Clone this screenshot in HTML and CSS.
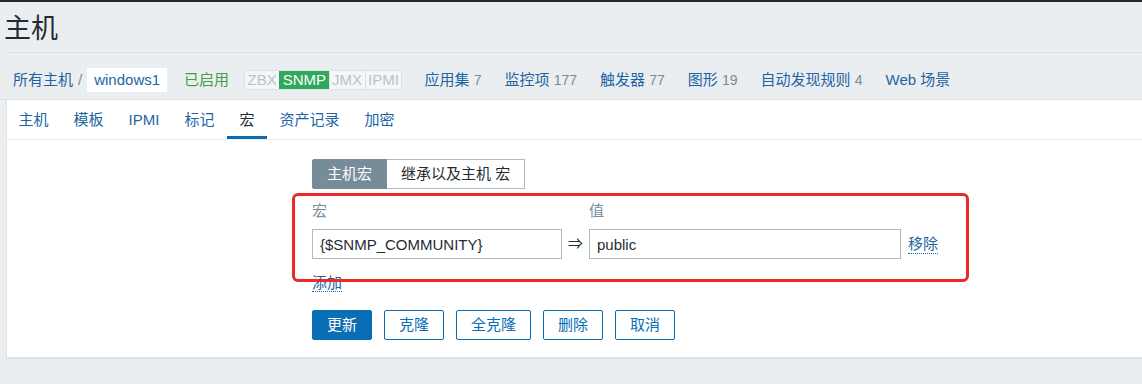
FILE: index.html
```html
<!DOCTYPE html>
<html lang="zh-CN">

<head>
  <meta charset="UTF-8" />
  <meta name="viewport" content="width=device-width, initial-scale=1.0" />
  <title>主机</title>
  <link rel="stylesheet" href="styles.css">
</head>

<body>
  <header class="page_header">
    <h1 class="page_title">主机</h1>
  </header>

  <nav class="host_nav">
    <div class="breadcrumbs">
      <a class="link" href="#">所有主机</a>
      <span class="breadcrumbs_sep">/</span>
      <span class="breadcrumbs_current"><a class="link" href="#">windows1</a></span>
    </div>
    <span class="status-enabled">已启用</span>
    <div class="status_container">
      <span class="status_item">ZBX</span>
      <span class="status_item status_item-green">SNMP</span>
      <span class="status_item">JMX</span>
      <span class="status_item">IPMI</span>
    </div>
    <ul class="host_nav-list">
      <li><a class="link" href="#">应用集</a> <sup class="count">7</sup></li>
      <li><a class="link" href="#">监控项</a> <sup class="count">177</sup></li>
      <li><a class="link" href="#">触发器</a> <sup class="count">77</sup></li>
      <li><a class="link" href="#">图形</a> <sup class="count">19</sup></li>
      <li><a class="link" href="#">自动发现规则</a> <sup class="count">4</sup></li>
      <li><a class="link" href="#">Web 场景</a></li>
    </ul>
  </nav>

  <main class="panel">
    <ul class="tabs">
      <li class="tab"><a href="#">主机</a></li>
      <li class="tab"><a href="#">模板</a></li>
      <li class="tab"><a href="#">IPMI</a></li>
      <li class="tab"><a href="#">标记</a></li>
      <li class="tab tab-active"><a href="#">宏</a></li>
      <li class="tab"><a href="#">资产记录</a></li>
      <li class="tab"><a href="#">加密</a></li>
    </ul>

    <form action="#" onsubmit="return false;" class="form">
      <div class="segment">
        <button type="button" class="segment_btn segment_btn-on">主机宏</button>
        <button type="button" class="segment_btn">继承以及主机 宏</button>
      </div>

      <div class="macros">
        <!-- red annotation frame from the screenshot, drawn over the table -->
        <div class="highlight"></div>
        <div class="macros_row macros_head">
          <span class="macros_col-name">宏</span>
          <span class="macros_arrow"></span>
          <span class="macros_col-value">值</span>
        </div>
        <div class="macros_row">
          <input class="textbox macros_col-name" type="text" value="{$SNMP_COMMUNITY}" />
          <span class="macros_arrow">&rArr;</span>
          <input class="textbox macros_col-value" type="text" value="public" />
          <a class="link link-action" href="#">移除</a>
        </div>
        <div class="macros_add">
          <a class="link link-action" href="#">添加</a>
        </div>
      </div>

      <div class="form_buttons">
        <button type="submit" class="btn btn-main">更新</button>
        <button type="button" class="btn">克隆</button>
        <button type="button" class="btn">全克隆</button>
        <button type="button" class="btn">删除</button>
        <button type="button" class="btn">取消</button>
      </div>
    </form>
  </main>
</body>

</html>
```

FILE: styles.css
```css
html {
  box-sizing: border-box;
}

*,
*::before,
*::after {
  box-sizing: inherit;
}

body {
  margin: 0;
  background: #ebeef0;
  color: #1f2c33;
  font-family: "Liberation Sans", "Noto Sans CJK SC", sans-serif;
  font-size: 15px;
  line-height: 20px;
}

ul {
  margin: 0;
  padding: 0;
  list-style: none;
}

a {
  text-decoration: none;
}

.link {
  color: #1c65a3;
}

.link-action {
  border-bottom: 1px dotted #1c65a3;
  line-height: 18px;
}

/* header */
.page_header {
  border-top: 2px solid #1f2c33;
}

.page_title {
  margin: 0 0 0 8px;
  padding: 3px 0 0 0;
  height: 51px;
  line-height: 48px;
  font-size: 27px;
  font-weight: normal;
  text-indent: -4px;
  border-bottom: 1px solid #dde2e5;
}

/* host navigation */
.host_nav {
  display: flex;
  align-items: center;
  height: 47px;
  padding: 8px 0 0 13px;
  border-bottom: 1px solid #dde2e5;
}

.breadcrumbs {
  display: flex;
  align-items: center;
}

.breadcrumbs_sep {
  margin: 0 5px 0 5px;
  color: #768d99;
}

.breadcrumbs_current {
  display: block;
  height: 24px;
  line-height: 24px;
  padding: 0 7px;
  background: #fff;
}

.status-enabled {
  margin-left: 17px;
  color: #429e47;
}

.status_container {
  display: flex;
  margin-left: 15px;
  height: 20px;
  border: 1px solid #dbe1e4;
  background: #f4f6f7;
}

.status_item {
  padding: 0 2.5px;
  line-height: 18px;
  color: #b8c4ca;
  border-left: 1px solid #dbe1e4;
}

.status_item:first-child {
  border-left: 0;
}

.status_item-green {
  background: #2fa85c;
  color: #fff;
  border-left-color: #2fa85c;
}

.host_nav-list {
  display: flex;
  gap: 23px;
  margin-left: 22px;
}

.count {
  vertical-align: baseline;
  font-size: 14px;
  color: #768d99;
}

/* panel with tabs */
.panel {
  margin-left: 6px;
  background: #fff;
  border-left: 1px solid #dde2e5;
  border-bottom: 2px solid #dde2e5;
}

.tabs {
  display: flex;
  border-bottom: 1px solid #ebeef0;
  margin-left: -1px;
}

.tab a {
  display: block;
  height: 39px;
  padding: 4px 12.5px 0;
  line-height: 32px;
  color: #1c65a3;
  border-bottom: 3px solid transparent;
}

.tab-active a {
  color: #1f2c33;
  border-bottom-color: #0a6eb4;
}

.form {
  padding: 19px 0 17px 305px;
}

.segment {
  display: flex;
}

.segment_btn {
  height: 30px;
  margin: 0;
  padding: 0 14px;
  font: inherit;
  color: #1f2c33;
  background: #fff;
  border: 1px solid #acbbc2;
  border-left: 0;
}

.segment_btn-on {
  color: #fff;
  background: #768d99;
  border: 1px solid #768d99;
  border-radius: 2px 0 0 2px;
}

.macros {
  position: relative;
  margin-top: 12px;
}

.highlight {
  position: absolute;
  left: -20px;
  top: -8px;
  width: 677px;
  height: 89px;
  border: 3.5px solid #ea2a2a;
  border-radius: 6px;
  pointer-events: none;
}

.macros_row {
  display: flex;
  align-items: center;
}

.macros_head {
  color: #768d99;
  margin-bottom: 8px;
}

.macros_col-name {
  width: 250px;
}

.macros_arrow {
  width: 27px;
  text-align: center;
}

.macros_col-value {
  width: 312px;
}

.textbox {
  height: 30px;
  margin: 0;
  padding: 0 7px;
  font: inherit;
  color: #1f2c33;
  border: 1px solid #acbbc2;
  border-radius: 0;
  background: #fff;
}

.macros_row .link-action {
  margin-left: 7px;
}

.macros_add {
  margin-top: 14px;
  height: 20px;
}

.form_buttons {
  display: flex;
  gap: 12px;
  margin-top: 17px;
}

.btn {
  height: 30px;
  margin: 0;
  padding: 0 14px;
  font: inherit;
  color: #0a6eb4;
  background: #fff;
  border: 1px solid #0a6eb4;
  border-radius: 2px;
}

.btn-main {
  color: #fff;
  background: #0a6eb4;
}
```
